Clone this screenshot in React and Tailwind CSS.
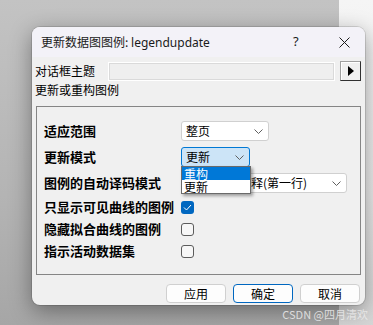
import React from 'react';

const cjk = { fontFamily: '"Noto Sans CJK SC", "Liberation Sans", sans-serif' };

function Chevron() {
  return (
    <svg width="9" height="5" viewBox="0 0 9 5">
      <path d="M0.5 0.5 L4.5 4.5 L8.5 0.5" fill="none" stroke="#5f5f5f" strokeWidth="1" />
    </svg>
  );
}

function Select({ children, width, active, textPad = 'pl-[4px]' }) {
  return (
    <div
      className={`relative flex h-[20px] items-center justify-between rounded-[3px] border pr-[5px] ${textPad} ${
        active ? 'border-[#0078d4] bg-[#cce4f7]' : 'border-[#d0d0d0] bg-white'
      }`}
      style={{ width }}
    >
      <span className="whitespace-nowrap text-[12px] leading-[12px] text-black">{children}</span>
      <Chevron />
    </div>
  );
}

function Check({ checked }) {
  return checked ? (
    <div className="flex h-[13px] w-[13px] items-center justify-center rounded-[3px] bg-[#0067c0]">
      <svg width="9" height="7" viewBox="0 0 9 7">
        <path d="M1 3.5 L3.5 6 L8 1" fill="none" stroke="#ffffff" strokeWidth="1" />
      </svg>
    </div>
  ) : (
    <div className="h-[13px] w-[13px] rounded-[3px] border border-[#5c5c5c] bg-[#f7f7f7]" />
  );
}

function Row({ label, children, className = '' }) {
  return (
    <div className={`flex h-[20px] items-center ${className}`}>
      <div className="w-[137px] text-[13px] font-bold leading-[14px] text-black">{label}</div>
      {children}
    </div>
  );
}

function Btn({ children, primary }) {
  return (
    <button
      className={`flex h-[19px] w-[60px] items-center justify-center rounded-[4px] bg-[#fdfdfd] text-[12px] text-black ${
        primary ? 'border border-[#0067c0]' : 'border border-[#d0d0d0]'
      }`}
    >
      {children}
    </button>
  );
}

export default function App() {
  return (
    <div
      className="relative h-[325px] w-[373px] overflow-hidden bg-[linear-gradient(to_bottom,#c3c3c3,#b4b4b4_60%,#a6a6a6)] pl-[32px] pt-[27px]"
      style={cjk}
    >
      {/* lighter strip of the backdrop on the right */}
      <div className="absolute right-0 top-0 h-full w-[34px] bg-[linear-gradient(to_bottom,#f5f5f5,#ebebeb_60%,#d6d6d6)]" />

      {/* dialog */}
      <div className="relative h-[278px] w-[333px] rounded-[8px] bg-[#f0f0f0] shadow-[0_0_0_1px_rgba(0,0,0,0.12),0_6px_22px_rgba(0,0,0,0.38)]">
        {/* title bar */}
        <div className="flex h-[30px] items-center rounded-t-[8px] bg-[#f3f2f8] pl-[9px] text-[12px] text-[#1a1a1a]">
          <span className="w-[252px] whitespace-nowrap">
            更新数据图图例: <span style={{ fontFamily: '"Noto Sans", sans-serif' }}>legendupdate</span>
          </span>
          <span className="w-[46px] text-[13px]" style={{ fontFamily: '"Noto Sans", sans-serif' }}>?</span>
          <svg width="11" height="11" viewBox="0 0 11 11">
            <path d="M0.5 0.5 L10.5 10.5 M10.5 0.5 L0.5 10.5" stroke="#1a1a1a" strokeWidth="1" />
          </svg>
        </div>

        {/* theme row */}
        <div className="mt-[4px] flex items-center pl-[3px]">
          <span className="w-[73px] text-[12px] leading-[14px] text-black">对话框主题</span>
          <div className="h-[19px] w-[227px] border border-white bg-[#efefef] shadow-[inset_0_0_0_1px_#dadada]" />
          <div className="ml-[5px] flex h-[20px] w-[21px] items-center justify-center border border-[#a0a0a0] border-b-[#303030] border-r-[#303030] bg-[#f0f0f0] shadow-[inset_1px_1px_0_#ffffff]">
            <svg width="6" height="10" viewBox="0 0 6 10">
              <path d="M0 0 L6 5 L0 10 Z" fill="#000" />
            </svg>
          </div>
        </div>

        <div className="mt-[2px] pl-[3px] text-[12px] leading-[14px] text-black">更新或重构图例</div>

        {/* group box */}
        <div className="ml-[4px] mt-[9px] h-[169px] w-[325px] border border-[#858585] pl-[7px] pt-[14px]">
          <Row label="适应范围">
            <Select width="88px">整页</Select>
          </Row>
          <Row label="更新模式" className="mt-[6px]">
            <div className="relative z-10">
              <Select width="69px" active>更新</Select>
              <div className="absolute left-0 top-[19px] w-[70px] border border-[#6a6a6a] bg-white shadow-[2px_2px_3px_rgba(0,0,0,0.35)]">
                <div className="h-[13px] bg-[#0078d7] pl-[2px] text-[12px] leading-[13px] text-white">重构</div>
                <div className="h-[13px] pl-[2px] text-[12px] leading-[13px] text-black">更新</div>
              </div>
            </div>
          </Row>
          <Row label="图例的自动译码模式" className="mt-[6px]">
            <Select width="166px" textPad="pl-[69px]">释(第一行)</Select>
          </Row>
          <Row label="只显示可见曲线的图例" className="mt-[4px]">
            <Check checked />
          </Row>
          <Row label="隐藏拟合曲线的图例" className="mt-[2px]">
            <Check />
          </Row>
          <Row label="指示活动数据集" className="mt-[2px]">
            <Check />
          </Row>
        </div>

        {/* buttons */}
        <div className="mt-[9px] flex gap-[7px] pl-[134px]">
          <Btn>应用</Btn>
          <Btn primary>确定</Btn>
          <Btn>取消</Btn>
        </div>
      </div>

      {/* watermark */}
      <div className="absolute bottom-[5px] right-[5px] text-[11px] leading-[12px] text-[#ececec]/85">
        CSDN @四月清欢
      </div>
    </div>
  );
}
